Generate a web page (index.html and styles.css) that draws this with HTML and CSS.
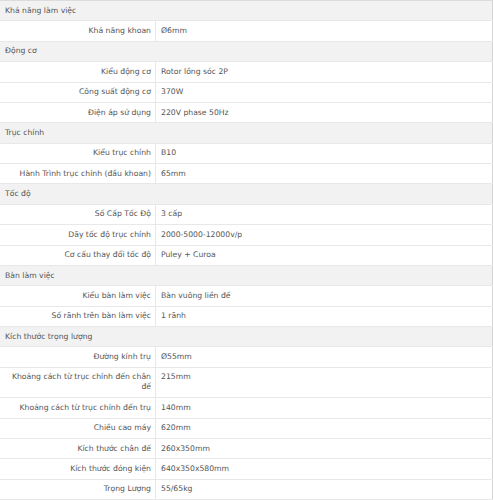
FILE: index.html
```html
<!DOCTYPE html>
<html lang="vi">
<head>
<meta charset="utf-8">
<title>Thông số kỹ thuật</title>
<link rel="stylesheet" href="styles.css">
</head>
<body>
<table class="specs">
  <tbody>
    <tr class="group"><td colspan="2">Khả năng làm việc</td></tr>
    <tr><th>Khả năng khoan</th><td>Ø6mm</td></tr>
    <tr class="group"><td colspan="2">Động cơ</td></tr>
    <tr><th>Kiểu động cơ</th><td>Rotor lồng sóc 2P</td></tr>
    <tr><th>Công suất động cơ</th><td>370W</td></tr>
    <tr><th>Điện áp sử dụng</th><td>220V phase 50Hz</td></tr>
    <tr class="group"><td colspan="2">Trục chính</td></tr>
    <tr><th>Kiểu trục chính</th><td>B10</td></tr>
    <tr><th>Hành Trình trục chính (đầu khoan)</th><td>65mm</td></tr>
    <tr class="group"><td colspan="2">Tốc độ</td></tr>
    <tr><th>Số Cấp Tốc Độ</th><td>3 cấp</td></tr>
    <tr><th>Dãy tốc độ trục chính</th><td>2000-5000-12000v/p</td></tr>
    <tr><th>Cơ cấu thay đổi tốc độ</th><td>Puley + Curoa</td></tr>
    <tr class="group"><td colspan="2">Bàn làm việc</td></tr>
    <tr><th>Kiểu bàn làm việc</th><td>Bàn vuông liền đế</td></tr>
    <tr><th>Số rãnh trên bàn làm việc</th><td>1 rãnh</td></tr>
    <tr class="group"><td colspan="2">Kích thước trọng lượng</td></tr>
    <tr><th>Đường kính trụ</th><td>Ø55mm</td></tr>
    <tr><th>Khoảng cách từ trục chính đến chân đế</th><td>215mm</td></tr>
    <tr><th>Khoảng cách từ trục chính đến trụ</th><td>140mm</td></tr>
    <tr><th>Chiều cao máy</th><td>620mm</td></tr>
    <tr><th>Kích thước chân đế</th><td>260x350mm</td></tr>
    <tr><th>Kích thước đóng kiện</th><td>640x350x580mm</td></tr>
    <tr><th>Trọng Lượng</th><td>55/65kg</td></tr>
  </tbody>
</table>
</body>
</html>
```
FILE: styles.css
```css
html, body {
  margin: 0;
  padding: 0;
  background: #ffffff;
}

.specs {
  width: 493px;
  border-collapse: collapse;
  font-family: "DejaVu Sans", Verdana, sans-serif;
  font-size: 7.7px;
  line-height: 10px;
  color: #555555;
  border-top: 1px solid #dcdcdc;
  border-right: 1px solid #d4d4d4;
}

.specs th,
.specs td {
  padding: 4.7px 4px;
  border-bottom: 1px solid #e8e8e8;
  vertical-align: top;
  font-weight: normal;
}

.specs th {
  width: 147px;
  text-align: right;
  border-right: 1px solid #e8e8e8;
}

.specs td {
  text-align: left;
}

.specs tr > td:last-child {
  padding-left: 5px;
}

.specs .group td {
  background: #f2f2f2;
  padding-left: 4px;
}
```
